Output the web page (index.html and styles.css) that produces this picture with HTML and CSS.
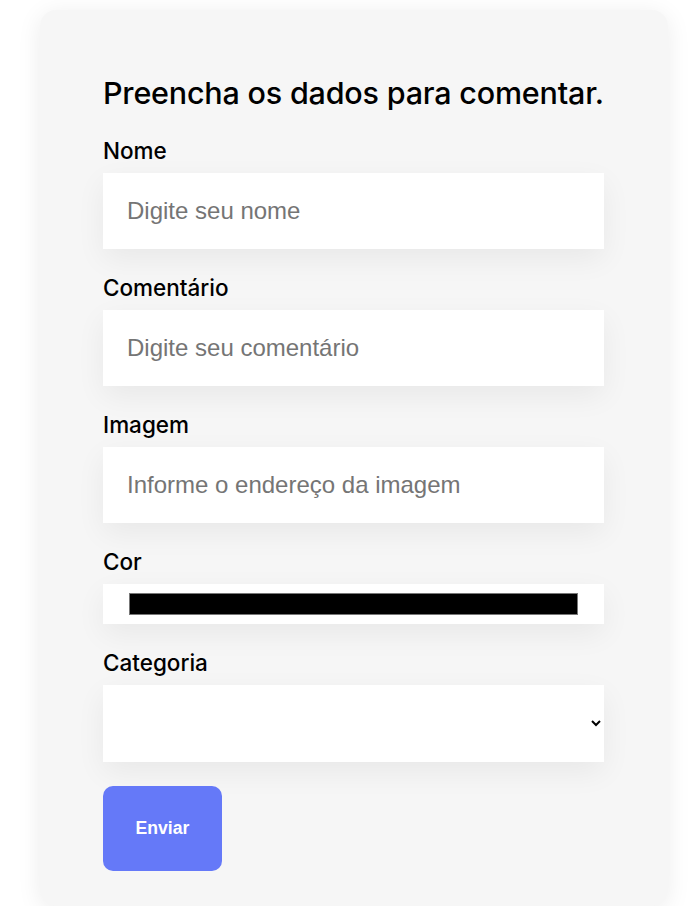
FILE: index.html
```html
<!DOCTYPE html>
<html lang="pt-BR">
<head>
<meta charset="utf-8">
<title>Comentar</title>
<link rel="stylesheet" href="styles.css">
</head>
<body>
  <div class="card">
    <form class="form">
      <h2 class="title">Preencha os dados para comentar.</h2>
      <div class="field">
        <label class="label" for="nome">Nome</label>
        <input class="input" id="nome" type="text" placeholder="Digite seu nome">
      </div>
      <div class="field">
        <label class="label" for="comentario">Comentário</label>
        <input class="input" id="comentario" type="text" placeholder="Digite seu comentário">
      </div>
      <div class="field">
        <label class="label" for="imagem">Imagem</label>
        <input class="input" id="imagem" type="text" placeholder="Informe o endereço da imagem">
      </div>
      <div class="field">
        <label class="label" for="cor">Cor</label>
        <input class="color" id="cor" type="color" value="#000000">
      </div>
      <div class="field">
        <label class="label" for="categoria">Categoria</label>
        <select class="select" id="categoria"><option></option></select>
      </div>
      <button class="button" type="button">Enviar</button>
    </form>
  </div>
</body>
</html>
```

FILE: styles.css
```css
html, body {
  margin: 0;
  padding: 0;
  background: #ffffff;
}
body {
  padding: 10px 0 0 40px;
}
.card {
  box-sizing: border-box;
  width: 628px;
  min-height: 896px;
  background: #f6f6f6;
  border-radius: 16px;
  box-shadow: 0 4px 24px rgba(0, 0, 0, 0.08);
  padding: 65px 64px 35px 63px;
}
.form {
  display: flex;
  flex-direction: column;
  width: 501px;
}
.title {
  font-family: "Inter", "Liberation Sans", sans-serif;
  font-weight: 500;
  font-size: 30.5px;
  letter-spacing: -0.2px;
  line-height: 36px;
  margin: 0 0 28px 0;
  color: #000;
}
.field {
  display: flex;
  flex-direction: column;
  margin-bottom: 27px;
}
.label {
  font-family: "Inter", "Liberation Sans", sans-serif;
  font-weight: 500;
  font-size: 22.5px;
  line-height: 24px;
  color: #000;
  margin-bottom: 10px;
}
.input {
  box-sizing: border-box;
  height: 76px;
  border: none;
  outline: none;
  background: #fff;
  padding: 0 24px;
  font-family: "Liberation Sans", Arial, sans-serif;
  font-size: 24px;
  color: #000;
  box-shadow: 0 10px 30px rgba(0, 0, 0, 0.06);
}
.input::placeholder {
  color: #757575;
}
.color {
  box-sizing: border-box;
  width: 501px;
  height: 40px;
  border: none;
  background: #fff;
  padding: 5px 24px;
  margin: 0;
  box-shadow: 0 10px 30px rgba(0, 0, 0, 0.06);
}
.select {
  box-sizing: border-box;
  height: 77px;
  border: none;
  outline: none;
  background: #fff;
  padding: 0 4px 0 24px;
  font-family: "Liberation Sans", Arial, sans-serif;
  font-size: 22.4px;
  color: #000;
  box-shadow: 0 10px 30px rgba(0, 0, 0, 0.06);
}
.button {
  align-self: flex-start;
  box-sizing: border-box;
  width: 119px;
  height: 85px;
  margin-top: -3px;
  border: none;
  border-radius: 10px;
  background: #6579f8;
  color: #fff;
  font-family: "Liberation Sans", Arial, sans-serif;
  font-weight: 700;
  font-size: 17.6px;
}
```
